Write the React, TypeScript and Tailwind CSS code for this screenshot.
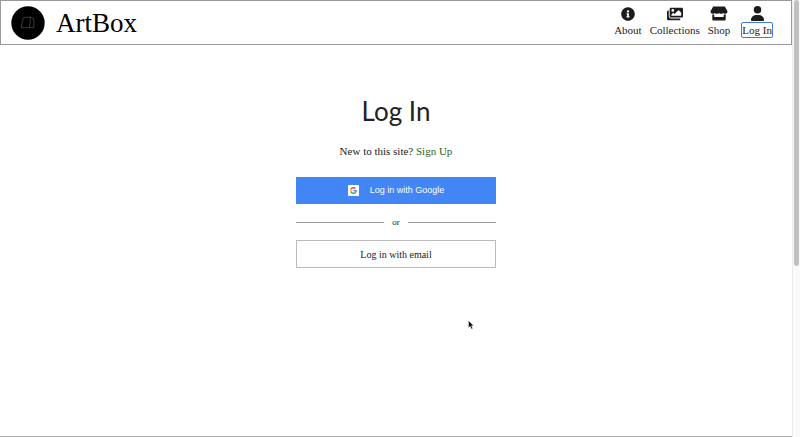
import type { ReactNode } from "react";
import { FaImages, FaInfoCircle } from "react-icons/fa";
import { FaUser } from "react-icons/fa6";

function NavItem({ icon, label, active = false }: { icon: ReactNode; label: string; active?: boolean }) {
  return (
    <a href="#" className={`flex flex-col items-center gap-[2px] text-[#1c1c1c] ${active ? "ml-1" : ""}`}>
      <span className="flex h-[15px] items-center">{icon}</span>
      <span
        className={`rounded-[1px] text-[11px] leading-[14px] ${active ? "outline-1 outline-[#3f7bd0]" : ""}`}
      >
        {label}
      </span>
    </a>
  );
}

function StoreIcon() {
  return (
    <svg viewBox="0 0 18 15" className="h-[15px] w-[18px]" fill="currentColor" aria-hidden="true">
      <path d="M3.200 0.500h11.600l2.600 4.600c.3 1.600-.6 2.700-2 2.700-.9 0-1.600-.3-2.100-.9-.5.6-1.300.9-2.100.9s-1.600-.3-2.200-.9c-.5.6-1.300.9-2.200.9s-1.600-.3-2.100-.9c-.5.6-1.200.9-2.100.9-1.400 0-2.300-1.100-2-2.700z" />
      <path d="M2.300 8.500h2v2.600h9.400V8.500h2v5.300c0 .5-.3.800-.8.800H3.100c-.5 0-.8-.3-.8-.8z" />
    </svg>
  );
}

function Logo() {
  return (
    <svg viewBox="0 0 34 34" className="size-[34px]" aria-hidden="true">
      <circle cx="17" cy="17" r="16.7" fill="#000" />
      <path
        d="M12.300 11.500 L19.500 11 L18.500 21.600 L10.200 21.800 Z M19.500 11 L22.800 12.600 L22.900 21.500 L18.500 21.600"
        fill="none"
        stroke="#5c5c5c"
        strokeWidth="0.6"
      />
    </svg>
  );
}

function GoogleMark() {
  return (
    <span className="flex size-[11px] items-center justify-center bg-white">
      <svg viewBox="0 0 48 48" className="size-[7px]" aria-hidden="true">
        <path fill="#EA4335" d="M24 9.5c3.54 0 6.71 1.22 9.21 3.6l6.85-6.85C35.9 2.38 30.47 0 24 0 14.62 0 6.51 5.38 2.56 13.22l7.98 6.19C12.43 13.72 17.74 9.5 24 9.5z" />
        <path fill="#4285F4" d="M46.98 24.55c0-1.57-.15-3.09-.38-4.55H24v9.02h12.94c-.58 2.96-2.26 5.48-4.78 7.18l7.73 6c4.51-4.18 7.09-10.36 7.09-17.65z" />
        <path fill="#FBBC05" d="M10.53 28.59c-.48-1.45-.76-2.99-.76-4.59s.27-3.14.76-4.59l-7.98-6.19C.92 16.46 0 20.12 0 24s.92 7.54 2.56 10.78l7.97-6.19z" />
        <path fill="#34A853" d="M24 48c6.48 0 11.93-2.13 15.89-5.81l-7.73-6c-2.15 1.45-4.92 2.3-8.16 2.3-6.26 0-11.57-4.22-13.47-9.91l-7.98 6.19C6.51 42.62 14.62 48 24 48z" />
      </svg>
    </span>
  );
}

export default function App() {
  return (
    <div className="flex min-h-screen bg-white font-['Liberation_Serif',serif] text-[#222]">
      <div className="flex flex-1 flex-col border-b border-[#aaa]">
        <header className="flex h-[45px] items-center justify-between border border-[#999] pr-[19px] pl-[10px]">
          <a href="#" className="flex items-center gap-[11px] text-black">
            <Logo />
            <span className="text-[27px] leading-8">ArtBox</span>
          </a>
          <nav className="flex gap-2 pb-[2px]">
            <NavItem icon={<FaInfoCircle size={14} />} label="About" />
            <NavItem icon={<FaImages size={16} />} label="Collections" />
            <NavItem icon={<StoreIcon />} label="Shop" />
            <NavItem icon={<FaUser size={15} />} label="Log In" active />
          </nav>
        </header>

        <main className="mx-auto flex w-[200px] flex-col items-center pt-12">
          <h1 className="font-['Lato',sans-serif] text-[26px] leading-9">Log In</h1>
          <p className="mt-[14px] text-[11px] leading-4">
            New to this site?{" "}
            <a href="#" className="text-[#2f5d1c]">
              Sign Up
            </a>
          </p>
          <button
            type="button"
            className="mt-[18px] flex h-[27px] w-full items-center justify-center gap-[11px] bg-[#4285f4] font-['Liberation_Sans',sans-serif] text-[9px] text-white"
          >
            <GoogleMark />
            Log in with Google
          </button>
          <div className="my-[10px] flex w-full items-center gap-2 text-[9px] leading-4">
            <span className="h-px flex-1 bg-[#999]" />
            or
            <span className="h-px flex-1 bg-[#999]" />
          </div>
          <button type="button" className="h-7 w-full border border-[#bbb] text-[10px]">
            Log in with email
          </button>
        </main>
      </div>

      <div className="w-2 border-l border-[#eee] bg-[#fafafa] px-px">
        <div className="h-[266px] rounded-full bg-[#c1c1c1]" />
      </div>

      <svg viewBox="0 0 12 19" className="absolute top-[320px] left-[468px] h-[10px] w-[6px]" aria-hidden="true">
        <path d="M1 1v14l3.4-3.2L6.8 17.5l2.6-1.1L7 10.900h4.300z" fill="#000" stroke="#fff" strokeWidth="0.8" />
      </svg>
    </div>
  );
}
